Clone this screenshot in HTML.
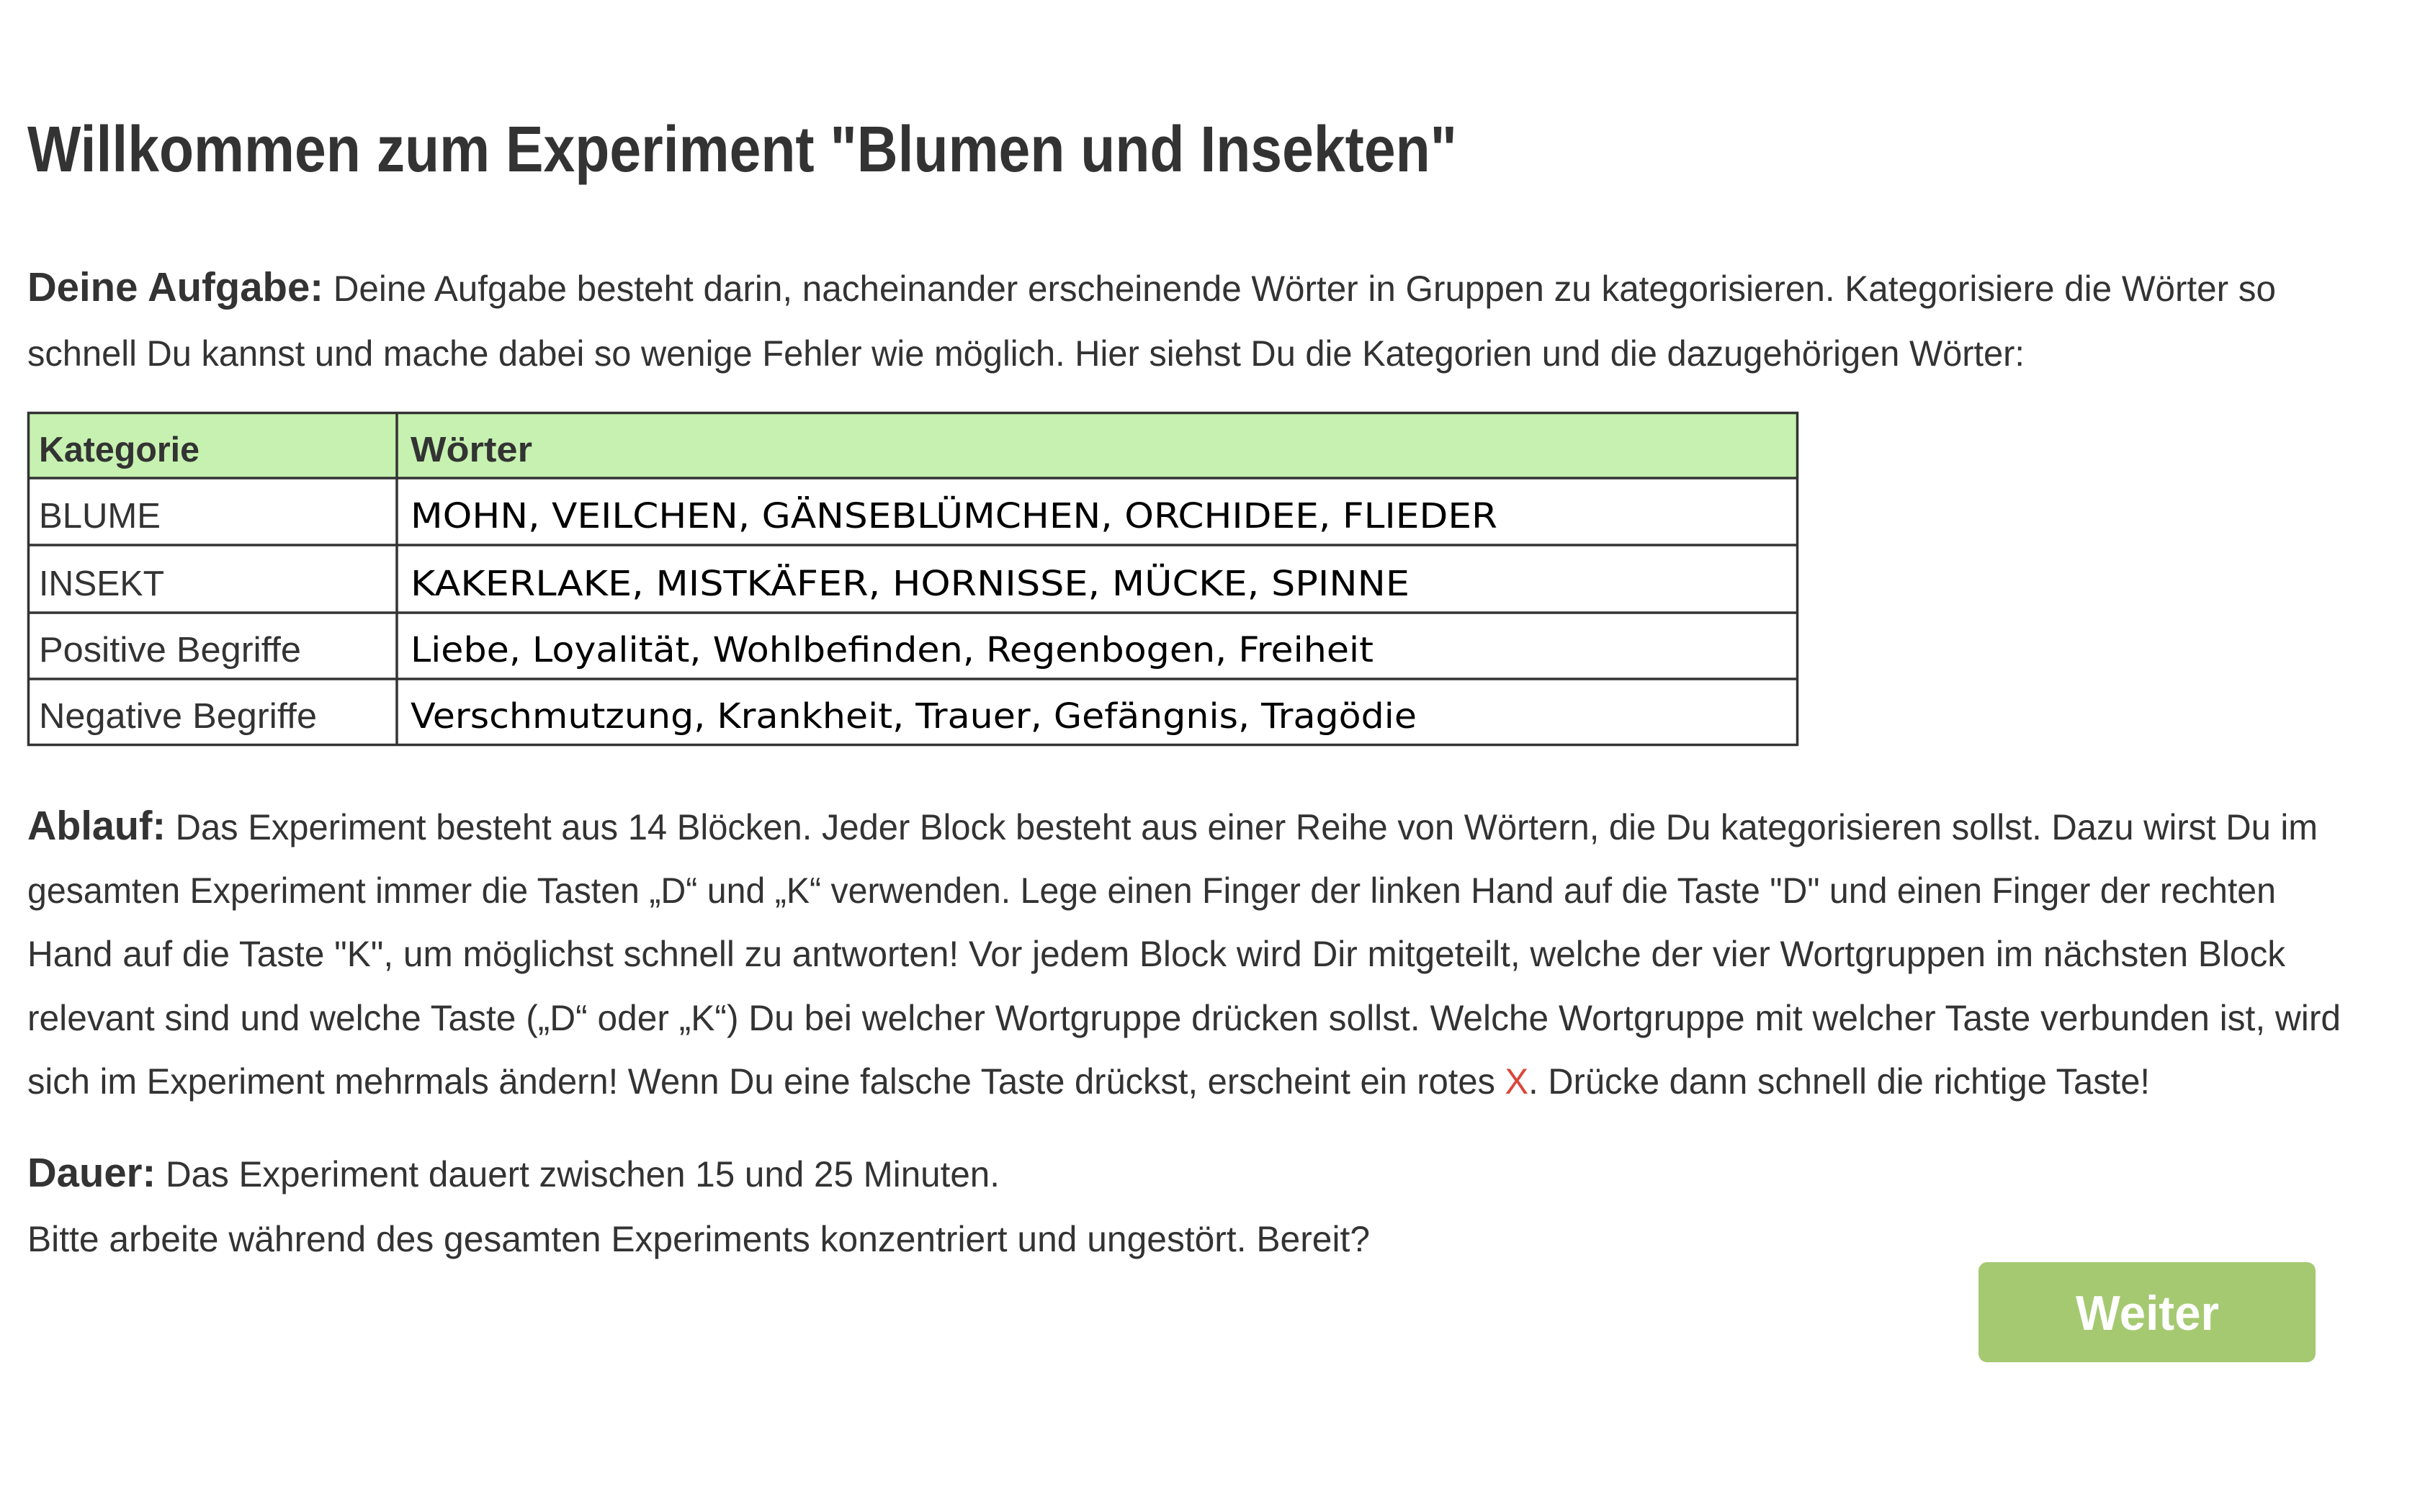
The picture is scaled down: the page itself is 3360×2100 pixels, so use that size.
<!DOCTYPE html>
<html><head><meta charset="utf-8">
<style>
html,body{margin:0;padding:0;background:#fff;}
svg{display:block;}
text{font-family:"Liberation Sans",sans-serif;fill:#333;}
.b{font-weight:bold;}
.m{font-family:"DejaVu Sans",sans-serif;fill:#000;}
</style></head>
<body>
<svg width="3360" height="2100" viewBox="0 0 3360 2100" xmlns="http://www.w3.org/2000/svg">
<rect width="3360" height="2100" fill="#fff"/>
<text x="38" y="238" font-size="90" class="b" textLength="1985" lengthAdjust="spacingAndGlyphs">Willkommen zum Experiment "Blumen und Insekten"</text>

<text x="38" y="418" font-size="50" textLength="3122" lengthAdjust="spacingAndGlyphs"><tspan class="b" font-size="57">Deine Aufgabe:</tspan> Deine Aufgabe besteht darin, nacheinander erscheinende Wörter in Gruppen zu kategorisieren. Kategorisiere die Wörter so</text>
<text x="38" y="508" font-size="50" textLength="2773" lengthAdjust="spacingAndGlyphs">schnell Du kannst und mache dabei so wenige Fehler wie möglich. Hier siehst Du die Kategorien und die dazugehörigen Wörter:</text>

<rect x="39.5" y="573.5" width="2456" height="90" fill="#c6f1b0"/>
<g stroke="#333" stroke-width="3.5" fill="none">
<rect x="39.5" y="573.5" width="2456" height="461"/>
<line x1="39" y1="664" x2="2496" y2="664"/>
<line x1="39" y1="757" x2="2496" y2="757"/>
<line x1="39" y1="851" x2="2496" y2="851"/>
<line x1="39" y1="943" x2="2496" y2="943"/>
<line x1="551" y1="573" x2="551" y2="1035"/>
</g>
<text x="54" y="641" font-size="49" class="b" textLength="223" lengthAdjust="spacingAndGlyphs">Kategorie</text>
<text x="570" y="641" font-size="49" class="b" textLength="169" lengthAdjust="spacingAndGlyphs">Wörter</text>
<text x="54" y="733" font-size="49" textLength="169" lengthAdjust="spacingAndGlyphs">BLUME</text>
<text x="54" y="827" font-size="49" textLength="174" lengthAdjust="spacingAndGlyphs">INSEKT</text>
<text x="54" y="919" font-size="49" textLength="364" lengthAdjust="spacingAndGlyphs">Positive Begriffe</text>
<text x="54" y="1011" font-size="49" textLength="386" lengthAdjust="spacingAndGlyphs">Negative Begriffe</text>
<text x="570" y="733" font-size="48" class="m" textLength="1509" lengthAdjust="spacingAndGlyphs">MOHN, VEILCHEN, GÄNSEBLÜMCHEN, ORCHIDEE, FLIEDER</text>
<text x="570" y="827" font-size="48" class="m" textLength="1387" lengthAdjust="spacingAndGlyphs">KAKERLAKE, MISTKÄFER, HORNISSE, MÜCKE, SPINNE</text>
<text x="570" y="919" font-size="48" class="m" textLength="1337" lengthAdjust="spacingAndGlyphs">Liebe, Loyalität, Wohlbefinden, Regenbogen, Freiheit</text>
<text x="570" y="1011" font-size="48" class="m" textLength="1397" lengthAdjust="spacingAndGlyphs">Verschmutzung, Krankheit, Trauer, Gefängnis, Tragödie</text>

<text x="38" y="1166" font-size="50" textLength="3180" lengthAdjust="spacingAndGlyphs"><tspan class="b" font-size="57">Ablauf:</tspan> Das Experiment besteht aus 14 Blöcken. Jeder Block besteht aus einer Reihe von Wörtern, die Du kategorisieren sollst. Dazu wirst Du im</text>
<text x="38" y="1254" font-size="50" textLength="3122" lengthAdjust="spacingAndGlyphs">gesamten Experiment immer die Tasten „D“ und „K“ verwenden. Lege einen Finger der linken Hand auf die Taste "D" und einen Finger der rechten</text>
<text x="38" y="1342" font-size="50" textLength="3135" lengthAdjust="spacingAndGlyphs">Hand auf die Taste "K", um möglichst schnell zu antworten! Vor jedem Block wird Dir mitgeteilt, welche der vier Wortgruppen im nächsten Block</text>
<text x="38" y="1431" font-size="50" textLength="3212" lengthAdjust="spacingAndGlyphs">relevant sind und welche Taste („D“ oder „K“) Du bei welcher Wortgruppe drücken sollst. Welche Wortgruppe mit welcher Taste verbunden ist, wird</text>
<text x="38" y="1519" font-size="50" textLength="2947" lengthAdjust="spacingAndGlyphs">sich im Experiment mehrmals ändern! Wenn Du eine falsche Taste drückst, erscheint ein rotes <tspan style="fill:#d9473a">X</tspan>. Drücke dann schnell die richtige Taste!</text>

<text x="38" y="1648" font-size="50" textLength="1350" lengthAdjust="spacingAndGlyphs"><tspan class="b" font-size="57">Dauer:</tspan> Das Experiment dauert zwischen 15 und 25 Minuten.</text>
<text x="38" y="1738" font-size="50" textLength="1864" lengthAdjust="spacingAndGlyphs">Bitte arbeite während des gesamten Experiments konzentriert und ungestört. Bereit?</text>

<rect x="2747" y="1753" width="468" height="139" rx="12" fill="#a5c971"/>
<text x="2882" y="1847" font-size="68" class="b" style="fill:#fff" textLength="199" lengthAdjust="spacingAndGlyphs">Weiter</text>
</svg>
</body></html>
